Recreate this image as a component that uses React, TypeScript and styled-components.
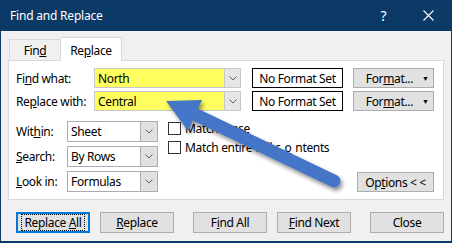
import styled, { createGlobalStyle } from 'styled-components';

const GlobalStyle = createGlobalStyle`
  html, body {
    margin: 0;
    padding: 0;
    background: #fff;
  }
  body {
    font-family: 'Segoe UI', 'Noto Sans', sans-serif;
    font-size: 12px;
    letter-spacing: -0.35px;
    color: #000;
  }
`;

const Window = styled.div`
  position: relative;
  box-sizing: border-box;
  width: 452px;
  height: 243px;
  border: 1px solid #0b3a67;
  border-top: none;
  border-bottom-width: 2px;
  background: #f0f0f0;
  display: flex;
  flex-direction: column;
`;

const TitleBar = styled.div`
  height: 31px;
  background: #0b3a67;
  color: #fff;
  display: flex;
  align-items: center;
  padding: 0 0 0 9px;
  font-size: 12px;
  letter-spacing: -0.2px;
`;

const Title = styled.span`
  flex: 1;
  padding-bottom: 1px;
`;

const TitleButton = styled.span`
  width: 45px;
  height: 31px;
  display: flex;
  align-items: center;
  justify-content: center;
  font-size: 14px;
`;

const Body = styled.div`
  padding: 7px 7px 0 7px;
  display: flex;
  flex-direction: column;
`;

const Tabs = styled.div`
  display: flex;
  align-items: flex-end;
  height: 23px;
  padding-left: 1px;
  position: relative;
  z-index: 1;
  margin-bottom: -1px;
`;

const Tab = styled.div<{ $active?: boolean }>`
  box-sizing: border-box;
  height: ${({ $active }) => ($active ? '24px' : '22px')};
  border: 1px solid #d9d9d9;
  border-bottom: ${({ $active }) => ($active ? 'none' : '1px solid #d9d9d9')};
  border-left: ${({ $active }) => ($active ? 'none' : '1px solid #d9d9d9')};
  background: ${({ $active }) => ($active ? '#fff' : '#f0f0f0')};
  display: flex;
  align-items: center;
  width: ${({ $active }) => ($active ? '61px' : '52px')};
  justify-content: center;
  padding-top: 1px;
`;

const Panel = styled.div`
  box-sizing: border-box;
  height: 140px;
  border: 1px solid #d9d9d9;
  background: #fff;
  padding: 7px 8px 7px 7px;
  display: flex;
  flex-direction: column;
`;

const TopGrid = styled.div`
  display: grid;
  grid-template-columns: 78px 147px 102px 91px;
  grid-auto-rows: 20px;
  row-gap: 3px;
  align-items: center;
`;

const Label = styled.span`
  white-space: nowrap;
`;

const Combo = styled.div<{ $bg?: string }>`
  box-sizing: border-box;
  height: 20px;
  display: flex;
  border: 1px solid #c8c8c8;
  background: ${({ $bg }) => $bg || '#fff'};
`;

const ComboText = styled.span`
  flex: 1;
  display: flex;
  align-items: center;
  padding-left: 3px;
`;

const DropButton = styled.span`
  box-sizing: border-box;
  width: 16px;
  background: #e6e6e6;
  border-left: 1px solid #c8c8c8;
  display: flex;
  align-items: center;
  justify-content: center;
`;

const FormatBox = styled.div`
  box-sizing: border-box;
  height: 20px;
  margin-left: 11px;
  border: 1px solid #000;
  background: #fff;
  display: flex;
  align-items: center;
  justify-content: center;
`;

const FormatButton = styled.div`
  box-sizing: border-box;
  width: 81px;
  height: 20px;
  margin-left: 10px;
  border: 1px solid #adadad;
  background: #e1e1e1;
  display: flex;
  align-items: center;
  justify-content: flex-end;
  padding-right: 4px;
  gap: 9px;
`;

const SmallArrow = styled.span`
  font-size: 7px;
  letter-spacing: 0;
`;

const Lower = styled.div`
  display: flex;
  margin-top: 10px;
  flex: 1;
`;

const SelectGrid = styled.div`
  display: grid;
  grid-template-columns: 51px 91px;
  grid-auto-rows: 21px;
  row-gap: 4px;
  align-items: center;
`;

const Select = styled.div`
  box-sizing: border-box;
  height: 21px;
  display: flex;
  border: 1px solid #adadad;
  background: #fff;
`;

const SelectDrop = styled(DropButton)`
  width: 17px;
  background: #e1e1e1;
  border-left: 1px solid #adadad;
`;

const Checks = styled.div`
  display: flex;
  flex-direction: column;
  gap: 6px;
  margin-left: 10px;
  padding-top: 1px;
  flex: 1;
`;

const CheckRow = styled.label`
  display: flex;
  align-items: center;
  gap: 4px;
  height: 13px;
`;

const CheckBox = styled.span`
  box-sizing: border-box;
  width: 13px;
  height: 13px;
  border: 1px solid #333;
  background: #fff;
`;

const OptionsButton = styled.div`
  align-self: flex-end;
  box-sizing: border-box;
  width: 77px;
  height: 20px;
  margin: 0 1px 0 0;
  border: 1px solid #adadad;
  background: #e1e1e1;
  display: flex;
  align-items: center;
  justify-content: center;
`;

const ButtonRow = styled.div`
  display: flex;
  margin-top: 12px;
  padding-left: 8px;
`;

const Button = styled.div<{ $gap?: number; $focused?: boolean }>`
  box-sizing: border-box;
  width: 74px;
  height: 21px;
  margin-left: ${({ $gap }) => $gap || 0}px;
  border: 1px solid ${({ $focused }) => ($focused ? '#0078d7' : '#adadad')};
  box-shadow: ${({ $focused }) => ($focused ? 'inset 0 0 0 1px #0078d7' : 'none')};
  background: #e1e1e1;
  display: flex;
  align-items: center;
  justify-content: center;
`;

const FocusRing = styled.span`
  padding: 0 2px;
  outline: 1px dotted #000;
  outline-offset: 0;
  line-height: 15px;
`;

const ArrowLayer = styled.svg`
  position: absolute;
  left: -1px;
  top: 0;
  pointer-events: none;
`;

const Chevron = () => (
  <svg width="8" height="5" viewBox="0 0 8 5">
    <path d="M0.5 0.5 L4 4 L7.5 0.5" fill="none" stroke="#606060" strokeWidth="1" />
  </svg>
);

const u = (s: string) => <u>{s}</u>;

export default function App() {
  return (
    <>
      <GlobalStyle />
      <Window>
        <TitleBar>
          <Title>Find and Replace</Title>
          <TitleButton>?</TitleButton>
          <TitleButton>
            <svg width="11" height="11" viewBox="0 0 11 11">
              <path d="M0.5 0.5 L10.5 10.5 M10.5 0.5 L0.5 10.5" stroke="#fff" strokeWidth="1.1" />
            </svg>
          </TitleButton>
        </TitleBar>
        <Body>
          <Tabs>
            <Tab>Fin{u('d')}</Tab>
            <Tab $active>Re{u('p')}lace</Tab>
          </Tabs>
          <Panel>
            <TopGrid>
              <Label>Fi{u('n')}d what:</Label>
              <Combo $bg="#ffff5f">
                <ComboText>North</ComboText>
                <DropButton><Chevron /></DropButton>
              </Combo>
              <FormatBox>No Format Set</FormatBox>
              <FormatButton>
                <span>For{u('m')}at...</span>
                <SmallArrow>▼</SmallArrow>
              </FormatButton>
              <Label>Re{u('p')}lace with:</Label>
              <Combo $bg="#ffff5f">
                <ComboText>Central</ComboText>
                <DropButton><Chevron /></DropButton>
              </Combo>
              <FormatBox>No Format Set</FormatBox>
              <FormatButton>
                <span>For{u('m')}at...</span>
                <SmallArrow>▼</SmallArrow>
              </FormatButton>
            </TopGrid>
            <Lower>
              <SelectGrid>
                <Label>Wit{u('h')}in:</Label>
                <Select>
                  <ComboText>Sheet</ComboText>
                  <SelectDrop><Chevron /></SelectDrop>
                </Select>
                <Label>{u('S')}earch:</Label>
                <Select>
                  <ComboText>By Rows</ComboText>
                  <SelectDrop><Chevron /></SelectDrop>
                </Select>
                <Label>{u('L')}ook in:</Label>
                <Select>
                  <ComboText>Formulas</ComboText>
                  <SelectDrop><Chevron /></SelectDrop>
                </Select>
              </SelectGrid>
              <Checks>
                <CheckRow><CheckBox />Match {u('c')}ase</CheckRow>
                <CheckRow><CheckBox />Match entire cell c{u('o')}ntents</CheckRow>
              </Checks>
              <OptionsButton>Op{u('t')}ions &lt; &lt;</OptionsButton>
            </Lower>
          </Panel>
          <ButtonRow>
            <Button $focused>
              <FocusRing>Replace {u('A')}ll</FocusRing>
            </Button>
            <Button $gap={10}>{u('R')}eplace</Button>
            <Button $gap={19}>F{u('i')}nd All</Button>
            <Button $gap={10}>{u('F')}ind Next</Button>
            <Button $gap={19}>Close</Button>
          </ButtonRow>
        </Body>
        <ArrowLayer width="452" height="243" viewBox="0 0 452 243">
          <defs>
            <filter id="shadow" x="-20%" y="-20%" width="140%" height="140%">
              <feDropShadow dx="2" dy="3" stdDeviation="2" floodColor="#000" floodOpacity="0.45" />
            </filter>
          </defs>
          <g filter="url(#shadow)" fill="#4574c6">
            <line x1="192" y1="113" x2="334" y2="181" stroke="#4574c6" strokeWidth="13" strokeLinecap="round" />
            <polygon points="166,101 202,100 188,131" />
          </g>
        </ArrowLayer>
      </Window>
    </>
  );
}
